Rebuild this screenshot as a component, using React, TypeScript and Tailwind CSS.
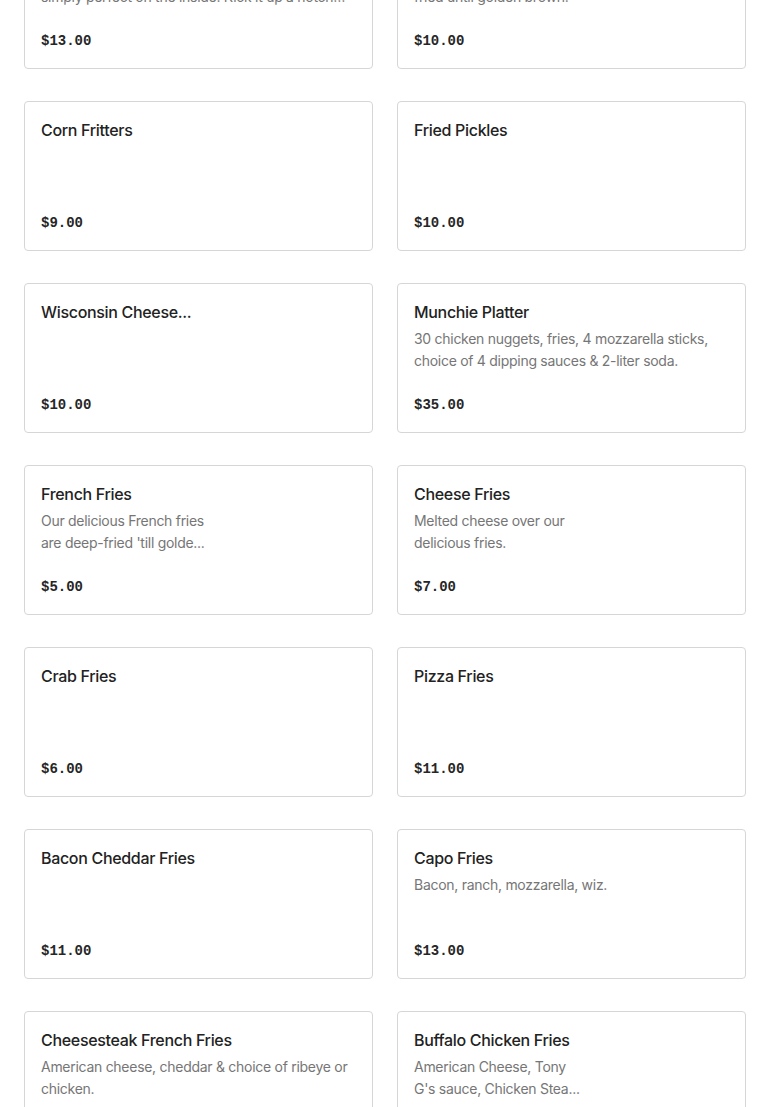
import React from "react";

type Item = { name: string; desc?: string; price: string };

const items: Item[] = [
  { name: "Jalapeño Poppers", desc: "Crispy on the outside and\nsimply perfect on the inside. Kick it up a notch with our spicy ranch dipping sauce.", price: "$13.00" },
  { name: "Onion Rings", desc: "Thick-cut sweet onions battered and\nfried until golden brown.", price: "$10.00" },
  { name: "Corn Fritters", price: "$9.00" },
  { name: "Fried Pickles", price: "$10.00" },
  { name: "Wisconsin Cheese...", price: "$10.00" },
  { name: "Munchie Platter", desc: "30 chicken nuggets, fries, 4 mozzarella sticks, choice of 4 dipping sauces & 2-liter soda.", price: "$35.00" },
  { name: "French Fries", desc: "Our delicious French fries\nare deep-fried 'till golde...", price: "$5.00" },
  { name: "Cheese Fries", desc: "Melted cheese over our\ndelicious fries.", price: "$7.00" },
  { name: "Crab Fries", price: "$6.00" },
  { name: "Pizza Fries", price: "$11.00" },
  { name: "Bacon Cheddar Fries", price: "$11.00" },
  { name: "Capo Fries", desc: "Bacon, ranch, mozzarella, wiz.", price: "$13.00" },
  { name: "Cheesesteak French Fries", desc: "American cheese, cheddar & choice of ribeye or chicken.", price: "$12.00" },
  { name: "Buffalo Chicken Fries", desc: "American Cheese, Tony\nG's sauce, Chicken Stea...", price: "$13.00" },
];

function Card({ item }: { item: Item }) {
  return (
    <div className="flex h-[150px] flex-col justify-between rounded-[4px] border border-[#d6d6d6] bg-white p-4">
      <div className="min-w-0">
        <div className="truncate text-[16px] font-medium leading-6 tracking-[-0.02em] text-[#222222]">{item.name}</div>
        {item.desc && (
          <div className="mt-1 line-clamp-2 whitespace-pre-line text-[14px] leading-[22px] tracking-[-0.02em] text-[#767676]">
            {item.desc}
          </div>
        )}
      </div>
      <div
        className="mb-[-1px] text-[14px] font-bold leading-6 text-[#262626]"
        style={{ fontFamily: '"Liberation Mono", "DejaVu Sans Mono", monospace' }}
      >
        {item.price}
      </div>
    </div>
  );
}

export default function App() {
  return (
    <div
      className="h-[1107px] overflow-hidden bg-white"
      style={{ fontFamily: 'Inter, "Noto Sans", sans-serif' }}
    >
      <div className="mt-[-81px] grid grid-cols-2 gap-x-6 gap-y-8 px-6">
        {items.map((it, i) => (
          <Card key={i} item={it} />
        ))}
      </div>
    </div>
  );
}
